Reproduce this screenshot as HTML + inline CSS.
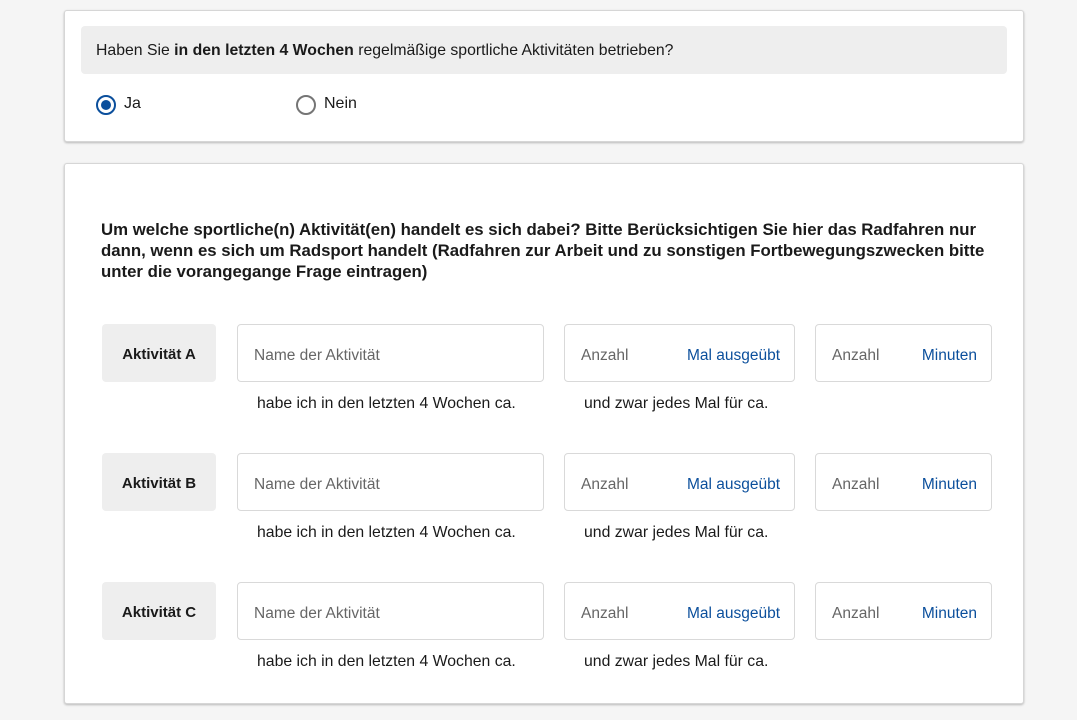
<!DOCTYPE html>
<html><head><meta charset="utf-8"><style>
body{margin:0;width:1077px;height:720px;background:#f5f5f5;font-family:"Liberation Sans",Arial,sans-serif;color:#1a1a1a;position:relative;overflow:hidden}
.card{position:absolute;left:64px;width:958px;background:#fff;border:1px solid #d6d6d6;border-radius:3px;box-shadow:0 1px 2px rgba(0,0,0,.25)}
.a{position:absolute}
.q{left:81px;top:26px;width:926px;height:48px;background:#eeeeee;border-radius:4px;font-size:15.8px;line-height:50px;box-sizing:border-box;padding-left:15px}
.radio{width:16px;height:16px;border-radius:50%;border:2px solid #757575}
.lab{width:114px;height:58px;background:#eeeeee;border-radius:4px;font-size:15px;font-weight:bold;text-align:center;line-height:62px}
.inp{height:56px;border:1px solid #d9d9d9;border-radius:4px;background:#fff;font-size:15.5px;line-height:61px;color:#666;box-sizing:content-box}
.blue{color:#0b4f9c;position:absolute;right:14px;top:0}
.h{font-size:15.8px}
</style></head><body>
<div class="card" style="top:10px;height:130px"></div>
<div class="card" style="top:163px;height:539px"></div>
<div class="a q">Haben Sie <b>in den letzten 4 Wochen</b> regelmäßige sportliche Aktivitäten betrieben?</div>
<div class="a radio" style="left:96px;top:95px;border-color:#0b4f9c"><div style="position:absolute;left:3px;top:3px;width:10px;height:10px;border-radius:50%;background:#0b4f9c"></div></div>
<div class="a" style="left:124px;top:95px;font-size:16px">Ja</div>
<div class="a radio" style="left:296px;top:95px"></div>
<div class="a" style="left:324px;top:95px;font-size:16px">Nein</div>
<div class="a" style="left:101px;top:219px;width:920px;font-size:16.8px;font-weight:bold;line-height:21px;white-space:nowrap">Um welche sportliche(n) Aktivität(en) handelt es sich dabei? Bitte Berücksichtigen Sie hier das Radfahren nur<br>dann, wenn es sich um Radsport handelt (Radfahren zur Arbeit und zu sonstigen Fortbewegungszwecken bitte<br>unter die vorangegange Frage eintragen)</div>

<div class="a lab" style="left:102px;top:324px">Aktivität A</div>
<div class="a inp" style="left:237px;top:324px;width:289px;padding-left:16px">Name der Aktivität</div>
<div class="a inp" style="left:564px;top:324px;width:213px;padding-left:16px">Anzahl<span class="blue">Mal ausgeübt</span></div>
<div class="a inp" style="left:815px;top:324px;width:159px;padding-left:16px">Anzahl<span class="blue">Minuten</span></div>
<div class="a h" style="left:257px;top:395px">habe ich in den letzten 4 Wochen ca.</div>
<div class="a h" style="left:584px;top:395px">und zwar jedes Mal für ca.</div>

<div class="a lab" style="left:102px;top:453px">Aktivität B</div>
<div class="a inp" style="left:237px;top:453px;width:289px;padding-left:16px">Name der Aktivität</div>
<div class="a inp" style="left:564px;top:453px;width:213px;padding-left:16px">Anzahl<span class="blue">Mal ausgeübt</span></div>
<div class="a inp" style="left:815px;top:453px;width:159px;padding-left:16px">Anzahl<span class="blue">Minuten</span></div>
<div class="a h" style="left:257px;top:524px">habe ich in den letzten 4 Wochen ca.</div>
<div class="a h" style="left:584px;top:524px">und zwar jedes Mal für ca.</div>

<div class="a lab" style="left:102px;top:582px">Aktivität C</div>
<div class="a inp" style="left:237px;top:582px;width:289px;padding-left:16px">Name der Aktivität</div>
<div class="a inp" style="left:564px;top:582px;width:213px;padding-left:16px">Anzahl<span class="blue">Mal ausgeübt</span></div>
<div class="a inp" style="left:815px;top:582px;width:159px;padding-left:16px">Anzahl<span class="blue">Minuten</span></div>
<div class="a h" style="left:257px;top:653px">habe ich in den letzten 4 Wochen ca.</div>
<div class="a h" style="left:584px;top:653px">und zwar jedes Mal für ca.</div>
</body></html>
